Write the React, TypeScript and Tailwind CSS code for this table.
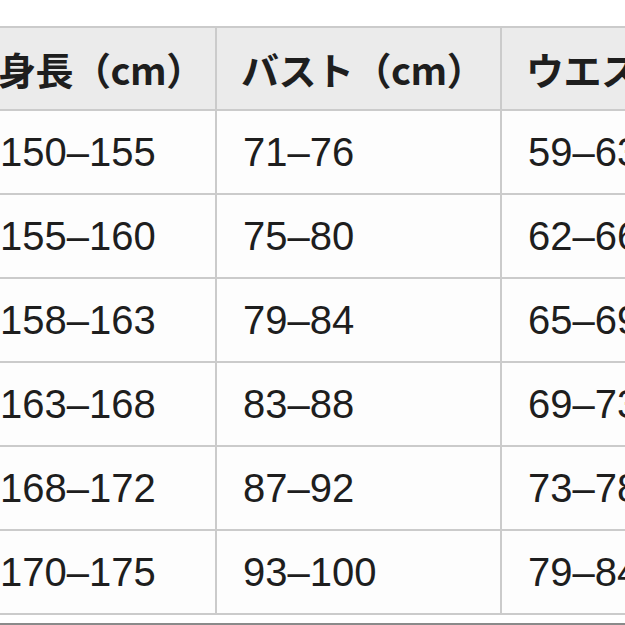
const header = ['身長（cm）', 'バスト（cm）', 'ウエスト（cm）']

const rows = [
  ['150–155', '71–76', '59–63'],
  ['155–160', '75–80', '62–66'],
  ['158–163', '79–84', '65–69'],
  ['163–168', '83–88', '69–73'],
  ['168–172', '87–92', '73–78'],
  ['170–175', '93–100', '79–84'],
]

export default function App() {
  return (
    <div className="w-[625px] h-[625px] overflow-hidden bg-white relative font-['Liberation_Sans','Noto_Sans_CJK_JP',sans-serif] text-[#1e1e1e]">
      <table className="mt-[26px] -ml-[28px] border-collapse table-fixed w-[812px]">
        <colgroup>
          <col className="w-[243px]" />
          <col className="w-[285px]" />
          <col className="w-[285px]" />
        </colgroup>
        <thead>
          <tr className="h-[83px] bg-[#ebebeb]">
            {header.map((h) => (
              <th
                key={h}
                className="border-2 border-[#cbcbcb] pl-[24px] text-left align-middle whitespace-nowrap overflow-hidden text-[38px] font-bold font-['Noto_Sans_CJK_JP',sans-serif] tracking-[-0.5px]"
              >
                {h}
              </th>
            ))}
          </tr>
        </thead>
        <tbody>
          {rows.map((r) => (
            <tr key={r[0]} className="h-[84px] bg-[#fdfdfd]">
              {r.map((c, i) => (
                <td
                  key={i}
                  className="border-2 border-[#cbcbcb] pl-[26px] text-left align-middle whitespace-nowrap text-[40px]"
                >
                  {c}
                </td>
              ))}
            </tr>
          ))}
        </tbody>
      </table>
      <div className="absolute left-0 right-0 bottom-0 h-[2px] bg-[#8a8a8a]" />
    </div>
  )
}
